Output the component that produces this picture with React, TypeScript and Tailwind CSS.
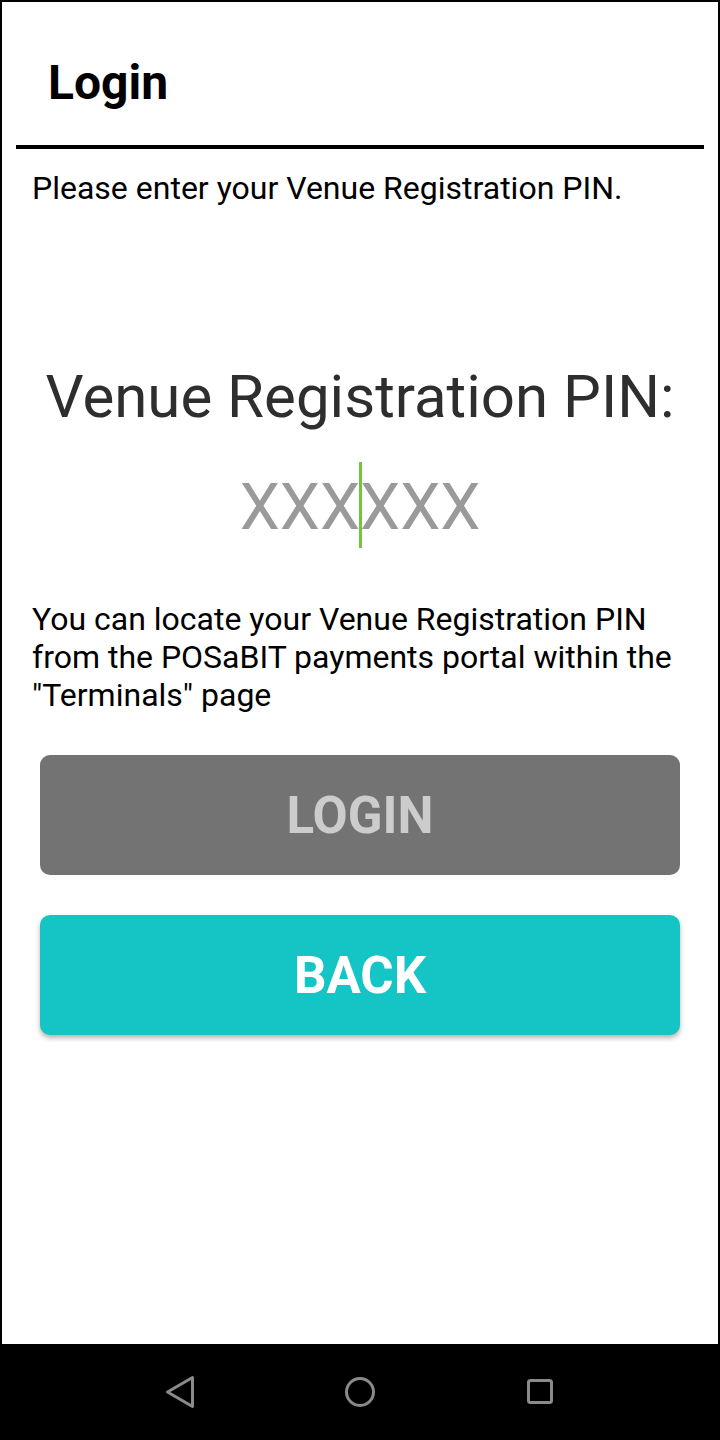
export default function App() {
  const font = { fontFamily: 'Roboto, "Liberation Sans", sans-serif' };

  return (
    <div className="w-[720px] h-[1440px] flex flex-col bg-black" style={font}>
      {/* screen */}
      <div className="flex-1 mx-[2px] mt-[2px] bg-white flex flex-col">
        {/* toolbar */}
        <div className="pt-[53px] pl-[46px]">
          <h1 className="text-[48px] leading-[56px] font-bold text-black">Login</h1>
        </div>
        <div className="mx-[14px] mt-[34px] h-[4px] bg-black" />

        <p className="mt-[20px] px-[30px] text-[32px] leading-[38px] text-black">
          Please enter your Venue Registration PIN.
        </p>

        <h2 className="mt-[155px] text-center text-[60px] leading-[70px] text-[#2e2e2e]">
          Venue Registration PIN:
        </h2>

        {/* pin input */}
        <div className="mt-[33px] flex justify-center">
          <div className="relative text-[64px] leading-[86px] text-[#9a9a9a]">
            <span>XXX</span>
            <span>XXX</span>
            <span className="absolute left-1/2 -translate-x-[1px] -top-[3px] w-[3px] h-[86px] bg-[#74c43c]" />
          </div>
        </div>

        <p className="mt-[49px] px-[30px] text-[32px] leading-[38px] text-black">
          You can locate your Venue Registration PIN from the POSaBIT payments portal within the "Terminals" page
        </p>

        <div className="mt-[41px] px-[38px] flex flex-col gap-[40px]">
          <button className="h-[120px] pt-[3px] rounded-[10px] bg-[#737373] flex items-center justify-center text-[51px] font-bold text-[#cccccc]">
            LOGIN
          </button>
          <button className="h-[120px] pt-[3px] rounded-[10px] bg-[#15c4c4] flex items-center justify-center text-[51px] font-bold text-white shadow-[0_3px_5px_rgba(0,0,0,0.3)]">
            BACK
          </button>
        </div>
      </div>

      {/* navigation bar */}
      <div className="h-[96px] bg-black flex justify-center items-center">
        <div className="w-[180px] flex justify-center">
          <svg width="40" height="40" viewBox="0 0 40 40" fill="none" stroke="#8a8a8a" strokeWidth="3" strokeLinejoin="round" strokeLinecap="round">
            <path d="M32.5 5.5 L7.5 20 L32.5 34.5 Z" />
          </svg>
        </div>
        <div className="w-[180px] flex justify-center">
          <svg width="40" height="40" viewBox="0 0 40 40" fill="none" stroke="#8a8a8a" strokeWidth="3">
            <circle cx="20" cy="20" r="13.5" />
          </svg>
        </div>
        <div className="w-[180px] flex justify-center">
          <svg width="40" height="40" viewBox="0 0 40 40" fill="none" stroke="#8a8a8a" strokeWidth="3">
            <rect x="8.5" y="8.5" width="23" height="22" rx="2" />
          </svg>
        </div>
      </div>
    </div>
  );
}
